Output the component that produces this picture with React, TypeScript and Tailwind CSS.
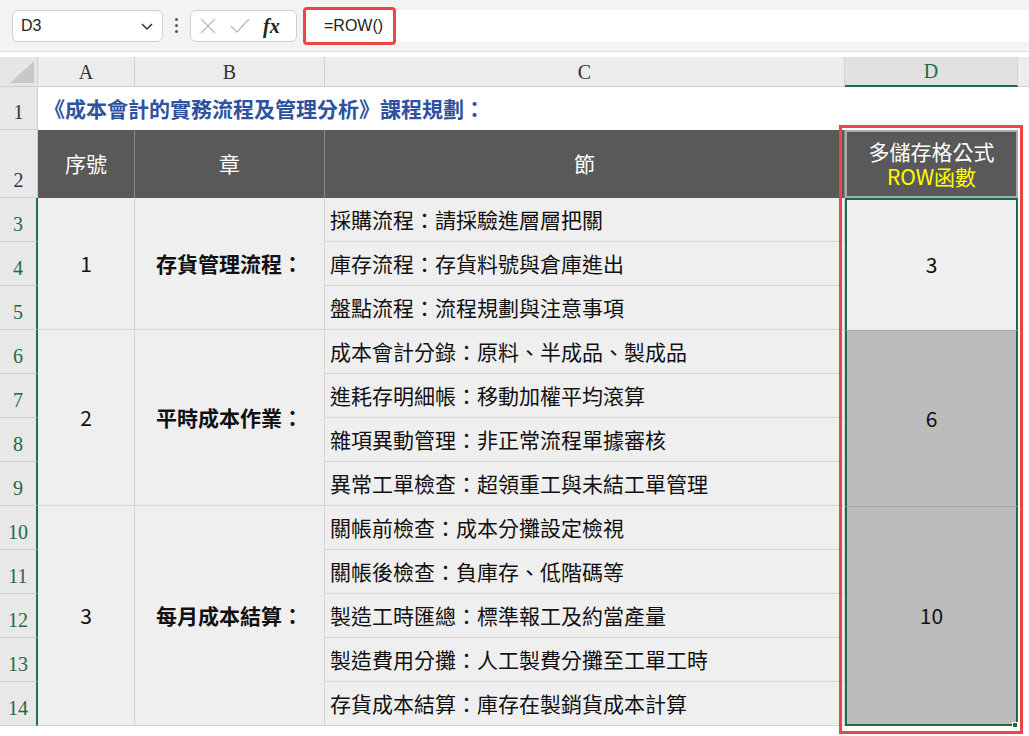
const cjk = { fontFamily: '"Noto Sans CJK TC", sans-serif' };
const serif = { fontFamily: '"Liberation Serif", serif' };

const sections = [
  { no: '1', ch: '存貨管理流程：', rows: ['採購流程：請採驗進層層把關', '庫存流程：存貨料號與倉庫進出', '盤點流程：流程規劃與注意事項'], d: '3' },
  { no: '2', ch: '平時成本作業：', rows: ['成本會計分錄：原料、半成品、製成品', '進耗存明細帳：移動加權平均滾算', '雜項異動管理：非正常流程單據審核', '異常工單檢查：超領重工與未結工單管理'], d: '6' },
  { no: '3', ch: '每月成本結算：', rows: ['關帳前檢查：成本分攤設定檢視', '關帳後檢查：負庫存、低階碼等', '製造工時匯總：標準報工及約當產量', '製造費用分攤：人工製費分攤至工單工時', '存貨成本結算：庫存在製銷貨成本計算'], d: '10' },
];

export default function App() {
  let r = 3;
  const blocks = sections.map((s, i) => {
    const start = r;
    r += s.rows.length;
    return { ...s, start, i };
  });
  return (
    <div className="w-[1029px] h-[736px] overflow-hidden bg-white relative" style={cjk}>
      <div className="h-[52px] bg-[#f3f3f3] flex items-center pl-[12px] gap-2 border-b border-[#e0e0e0]">
        <div className="w-[151px] h-[32px] bg-white border border-[#d0d0d0] rounded-md flex items-center justify-between px-2 text-[16px] text-[#222]" style={{ fontFamily: '"Liberation Sans", sans-serif' }}>
          D3
          <svg width="14" height="14" viewBox="0 0 14 14"><path d="M2 5l5 5 5-5" fill="none" stroke="#333" strokeWidth="1.5" /></svg>
        </div>
        <div className="flex flex-col gap-[3px] px-1">
          <span className="w-[3px] h-[3px] bg-[#555] rounded-full" />
          <span className="w-[3px] h-[3px] bg-[#555] rounded-full" />
          <span className="w-[3px] h-[3px] bg-[#555] rounded-full" />
        </div>
        <div className="w-[107px] h-[32px] bg-white border border-[#d0d0d0] rounded-md flex items-center gap-[12px] px-[8px]">
          <svg width="18" height="18" viewBox="0 0 18 18"><path d="M2 2l14 14M16 2L2 16" stroke="#bbb" strokeWidth="1.3" /></svg>
          <svg width="22" height="18" viewBox="0 0 22 18"><path d="M2 9l6 6L20 2" fill="none" stroke="#bbb" strokeWidth="1.3" /></svg>
          <span className="italic font-bold text-[20px] text-[#222]" style={serif}>fx</span>
        </div>
        <div className="flex-1 h-[32px] bg-white border-l border-[#d0d0d0] flex items-center relative">
          <div className="absolute left-[-3px] top-[-3px] w-[93px] h-[38px] border-[3px] border-[#ef4444] rounded-sm" />
          <span className="pl-[18px] text-[16px] text-[#222]" style={{ fontFamily: '"Liberation Sans", sans-serif' }}>=ROW()</span>
        </div>
      </div>
      <div
        className="grid mt-[5px]"
        style={{ gridTemplateColumns: '38px 97px 190px 520px 173px 1fr', gridTemplateRows: '30px 43px 68px repeat(12, 44px) 1fr' }}
      >
        <div className="bg-[#e6e6e6] border-r border-b border-[#d0d0d0] flex items-end justify-end p-[3px]">
          <svg width="24" height="22" viewBox="0 0 24 22"><path d="M24 0V22H0z" fill="#c8c8c8" /></svg>
        </div>
        {['A', 'B', 'C'].map((c) => (
          <div key={c} className="bg-[#ececec] border-r border-b border-[#d0d0d0] flex items-center justify-center text-[20px] text-[#333]" style={serif}>{c}</div>
        ))}
        <div className="bg-[#e1e1e1] border-r border-[#d0d0d0] border-b-2 border-b-[#1e6b43] flex items-center justify-center text-[20px] text-[#1e6b43]" style={serif}>D</div>
        <div className="bg-[#ececec] border-b border-[#d0d0d0]" />
        {Array.from({ length: 14 }, (_, k) => (
          <div
            key={k}
            className={`bg-[#e8e8e8] border-b border-[#d0d0d0] flex items-end justify-center pb-[2px] text-[20px] ${k >= 2 ? 'text-[#1e6b43] border-r-2 border-r-[#1e7145]' : 'text-[#333] border-r border-r-[#d0d0d0]'}`}
            style={{ ...serif, gridColumn: 1, gridRow: k + 2 }}
          >
            {k + 1}
          </div>
        ))}
        <div className="col-start-2 col-span-4 row-start-2 flex items-center pl-[6px] text-[21px] font-bold text-[#2f52a0]">《成本會計的實務流程及管理分析》課程規劃：</div>
        {['序號', '章', '節'].map((h, k) => (
          <div key={h} className="row-start-3 bg-[#595959] border-r border-[#8a8a8a] flex items-center justify-center text-white text-[21px]" style={{ gridColumn: k + 2 }}>{h}</div>
        ))}
        <div className="row-start-3 col-start-5 bg-[#595959] border-2 border-[#aaa] flex flex-col items-center justify-center leading-[25px] text-[21px]">
          <span className="text-white">多儲存格公式</span>
          <span className="text-[#ffff00]">ROW函數</span>
        </div>
        {blocks.map((b) => (
          <div key={b.no} className="contents">
            <div className="bg-[#efefef] border-r border-b border-[#d4d4d4] flex items-center justify-center text-[21px] text-[#111]" style={{ gridColumn: 2, gridRow: `${b.start + 1} / span ${b.rows.length}` }}>{b.no}</div>
            <div className="bg-[#efefef] border-r border-b border-[#d4d4d4] flex items-center justify-center text-[21px] font-bold text-[#111]" style={{ gridColumn: 3, gridRow: `${b.start + 1} / span ${b.rows.length}` }}>{b.ch}</div>
            {b.rows.map((t, j) => (
              <div key={t} className="bg-[#efefef] border-r border-b border-[#d4d4d4] flex items-center pl-[5px] text-[21px] text-[#111]" style={{ gridColumn: 4, gridRow: b.start + 1 + j }}>{t}</div>
            ))}
            <div
              className={`border-x-2 border-[#1e6b43] ${b.i === 0 ? 'bg-[#efefef] border-t-2' : 'bg-[#bcbcbc] border-t border-t-[#a8a8a8]'} ${b.i === 2 ? 'border-b-2' : ''} flex items-center justify-center text-[21px] text-[#111]`}
              style={{ gridColumn: 5, gridRow: `${b.start + 1} / span ${b.rows.length}` }}
            >
              {b.d}
            </div>
          </div>
        ))}
      </div>
      <div className="absolute left-[839px] top-[125px] w-[184px] h-[609px] border-[3px] border-[#ef4444] pointer-events-none" />
      <div className="absolute left-[1012px] top-[722px] w-[6px] h-[6px] bg-[#1e6b43] border border-white" />
    </div>
  );
}
